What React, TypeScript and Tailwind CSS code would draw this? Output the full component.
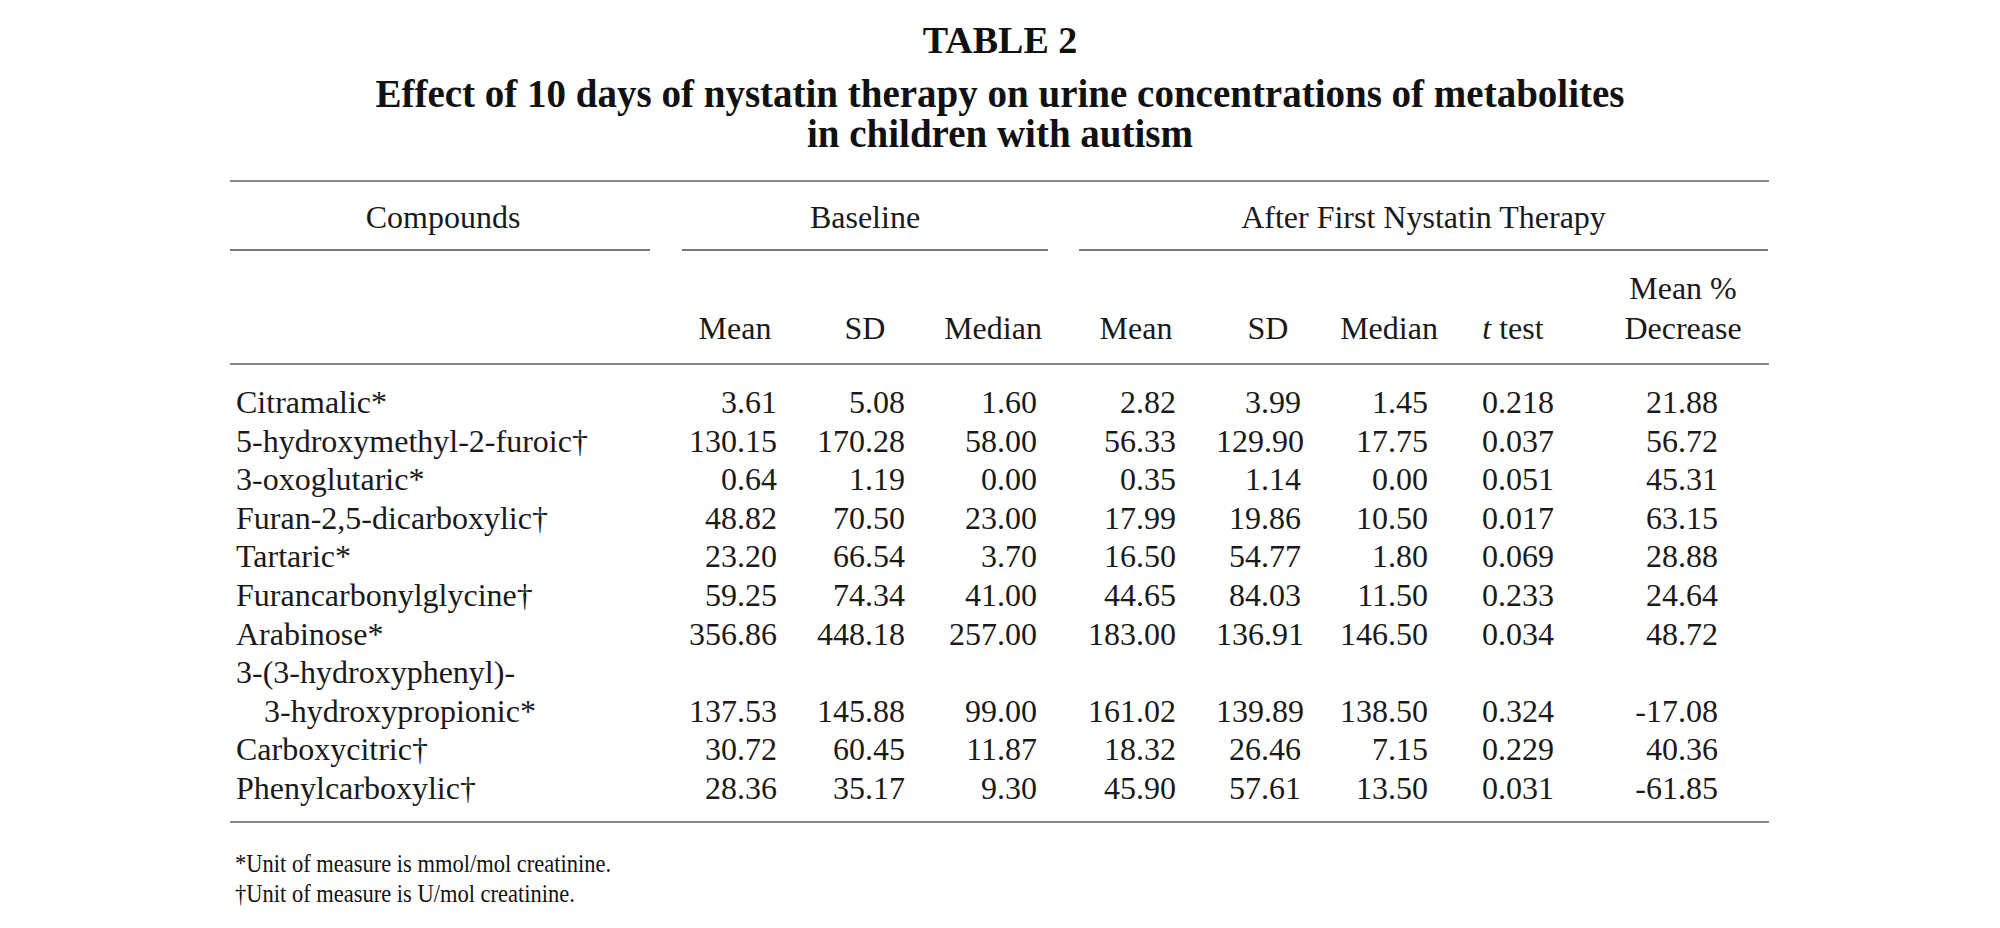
import React from "react";

type Row = { name: React.ReactNode; values: string[] };

const rows: Row[] = [
  { name: "Citramalic*", values: ["3.61", "5.08", "1.60", "2.82", "3.99", "1.45", "0.218", "21.88"] },
  { name: "5-hydroxymethyl-2-furoic†", values: ["130.15", "170.28", "58.00", "56.33", "129.90", "17.75", "0.037", "56.72"] },
  { name: "3-oxoglutaric*", values: ["0.64", "1.19", "0.00", "0.35", "1.14", "0.00", "0.051", "45.31"] },
  { name: "Furan-2,5-dicarboxylic†", values: ["48.82", "70.50", "23.00", "17.99", "19.86", "10.50", "0.017", "63.15"] },
  { name: "Tartaric*", values: ["23.20", "66.54", "3.70", "16.50", "54.77", "1.80", "0.069", "28.88"] },
  { name: "Furancarbonylglycine†", values: ["59.25", "74.34", "41.00", "44.65", "84.03", "11.50", "0.233", "24.64"] },
  { name: "Arabinose*", values: ["356.86", "448.18", "257.00", "183.00", "136.91", "146.50", "0.034", "48.72"] },
  {
    name: (
      <>
        <div>3-(3-hydroxyphenyl)-</div>
        <div className="pl-[28px]">3-hydroxypropionic*</div>
      </>
    ),
    values: ["137.53", "145.88", "99.00", "161.02", "139.89", "138.50", "0.324", "-17.08"],
  },
  { name: "Carboxycitric†", values: ["30.72", "60.45", "11.87", "18.32", "26.46", "7.15", "0.229", "40.36"] },
  { name: "Phenylcarboxylic†", values: ["28.36", "35.17", "9.30", "45.90", "57.61", "13.50", "0.031", "-61.85"] },
];

// right padding for each number column, so the figures line up like the print
const valuePad = [
  "pr-[13px]",
  "pr-[25px]",
  "pr-[19px]",
  "pr-[40px]",
  "pr-[19px]",
  "pr-[30px]",
  "pr-[14px]",
  "pr-[51px]",
];

const gridCols =
  "grid grid-cols-[450px_110px_140px_126px_160px_104px_138px_110px_201px]";

function Rule({ className = "" }: { className?: string }) {
  return <div className={`h-[2px] bg-[#8a8a8a] ${className}`} />;
}

export default function App() {
  return (
    <div
      className="w-[2000px] h-[928px] bg-white text-[#1a1a1a] overflow-hidden"
      style={{ fontFamily: '"Liberation Serif", "Times New Roman", serif' }}
    >
      {/* title */}
      <div className="flex flex-col items-center pt-[20px] font-bold text-[#111]">
        <div className="text-[38px] leading-[40px]">TABLE 2</div>
        <div className="mt-[14px] text-[39px] leading-[40px] text-center">
          <div>Effect of 10 days of nystatin therapy on urine concentrations of metabolites</div>
          <div>in children with autism</div>
        </div>
      </div>

      {/* table */}
      <div className="ml-[230px] w-[1539px] mt-[26px]">
        <Rule />

        {/* group headings */}
        <div className="flex pt-[16px] text-[32px] leading-[38px]">
          <div className="w-[420px]">
            <div className="text-center pl-[6px]">Compounds</div>
            <div className="mt-[13px] h-[2px] bg-[#7a7a7a]" />
          </div>
          <div className="w-[366px] ml-[32px]">
            <div className="text-center">Baseline</div>
            <div className="mt-[13px] h-[2px] bg-[#7a7a7a]" />
          </div>
          <div className="w-[689px] ml-[31px]">
            <div className="text-center">After First Nystatin Therapy</div>
            <div className="mt-[13px] h-[2px] bg-[#7a7a7a]" />
          </div>
        </div>

        {/* column headings */}
        <div className={`${gridCols} pt-[17px] text-[32px] leading-[40px] items-end`}>
          <div />
          <div className="text-center">Mean</div>
          <div className="text-center pl-[10px]">SD</div>
          <div className="text-center">Median</div>
          <div className="text-center">Mean</div>
          <div className="text-center">SD</div>
          <div className="text-center">Median</div>
          <div className="text-center">
            <span className="italic">t</span> test
          </div>
          <div className="text-center pl-[29px]">
            <div>Mean %</div>
            <div>Decrease</div>
          </div>
        </div>

        <Rule className="mt-[15px]" />

        {/* body */}
        <div className={`${gridCols} pt-[18px] text-[32px] leading-[38.6px] items-end`}>
          {rows.map((r, i) => (
            <React.Fragment key={i}>
              <div className="pl-[6px] whitespace-nowrap">{r.name}</div>
              {r.values.map((v, j) => (
                <div key={j} className={`text-right ${valuePad[j]}`}>
                  {v}
                </div>
              ))}
            </React.Fragment>
          ))}
        </div>

        <Rule className="mt-[13px] bg-[#7d7d7d]" />

        {/* footnotes */}
        <div className="mt-[27px] pl-[5px] text-[22.5px] leading-[26px] text-[#111] origin-top-left scale-y-[1.12]">
          <div>*Unit of measure is mmol/mol creatinine.</div>
          <div>†Unit of measure is U/mol creatinine.</div>
        </div>
      </div>
    </div>
  );
}
